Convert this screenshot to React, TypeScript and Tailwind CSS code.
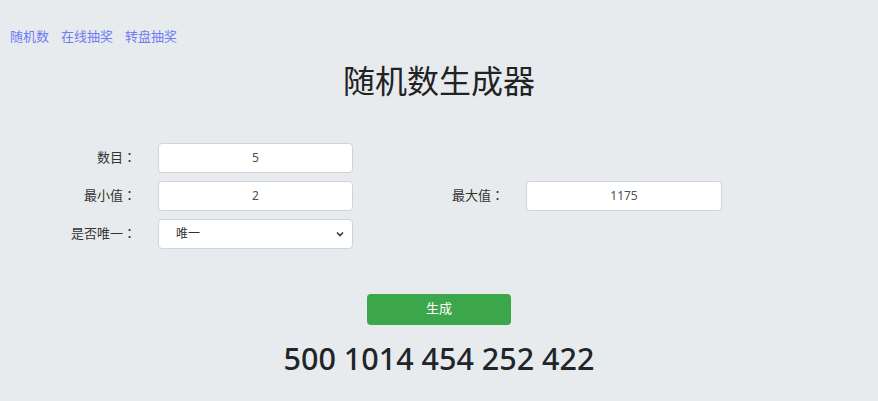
import React, { useState } from "react";

const font = "font-['Segoe_UI','Noto_Sans','Noto_Sans_CJK_SC',sans-serif]";

// full-width colon centred like the original page's font
function Colon() {
  return <span className="font-['Noto_Sans_CJK_TC',sans-serif]">：</span>;
}

function Field({ label, value }: { label: string; value: string }) {
  return (
    <>
      <div className="pr-[10px] text-right text-[13px] text-[#333]">
        {label}
        <Colon />
      </div>
      <div className="px-[12px]">
        <input
          readOnly
          value={value}
          className="h-[30px] w-full rounded-[4px] border border-[#ced4da] bg-white text-center text-[12px] text-[#495057] outline-none"
        />
      </div>
    </>
  );
}

function App() {
  const [unique, setUnique] = useState("唯一");
  const result = [500, 1014, 454, 252, 422];

  return (
    <div className={`${font} min-h-[401px] w-full bg-[#e8ebee] text-[#333]`}>
      <nav className="flex gap-[12px] pl-[10px] pt-[27px] text-[13px] text-[#6d7cf2]">
        <a href="#">随机数</a>
        <a href="#">在线抽奖</a>
        <a href="#">转盘抽奖</a>
      </nav>
      <h1 className="mt-[10px] text-center text-[32px] leading-[48px] text-[#222]">随机数生成器</h1>

      <div className="mt-[38px] grid grid-cols-[146px_219px_149px_220px] items-center gap-y-[8px]">
        <Field label="数目" value="5" />
        <div />
        <div />
        <Field label="最小值" value="2" />
        <Field label="最大值" value="1175" />
        <div className="pr-[10px] text-right text-[13px] text-[#333]">
          是否唯一
          <Colon />
        </div>
        <div className="relative px-[12px]">
          <select
            value={unique}
            onChange={(e) => setUnique(e.target.value)}
            className="h-[30px] w-full appearance-none rounded-[4px] border border-[#ced4da] bg-white pl-[17px] text-[12px] text-[#333] outline-none"
          >
            <option>唯一</option>
            <option>不唯一</option>
          </select>
          <svg
            className="pointer-events-none absolute right-[21px] top-[12px]"
            width="8"
            height="6"
            viewBox="0 0 8 6"
          >
            <path d="M1 1.5 L4 4.5 L7 1.5" fill="none" stroke="#343a40" strokeWidth="1.6" />
          </svg>
        </div>
      </div>

      <div className="mt-[45px] flex justify-center">
        <button className="h-[31px] w-[144px] rounded-[4px] bg-[#3ca74a] text-[13px] text-white">
          生成
        </button>
      </div>
      <div className="mt-[13px] text-center text-[30.5px] font-medium leading-[40px] text-[#212529]">
        {result.join(" ")}
      </div>
    </div>
  );
}

export default App;
